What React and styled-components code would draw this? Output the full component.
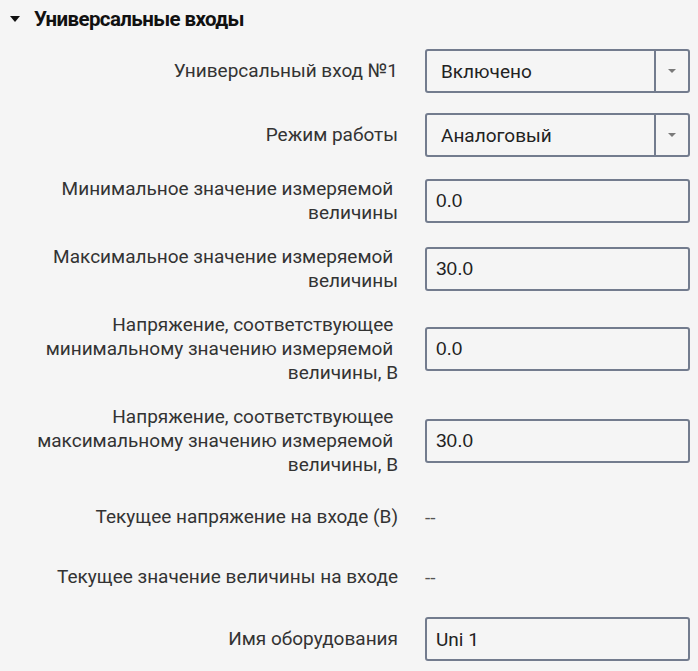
import React from 'react'
import styled, { createGlobalStyle } from 'styled-components';

const GlobalStyle = createGlobalStyle`
    body {
        margin: 0;
        background: #f5f5f5;
        font-family: Roboto, "Noto Sans", sans-serif;
        color: #333;
    }
`;

const Section = styled.div`
    width: 698px;
    padding: 0 8px 0 0;
    box-sizing: border-box;
`;

const Header = styled.div`
    display: flex;
    align-items: center;
    height: 37px;
    padding-left: 10px;
    gap: 14px;
    font-size: 20.5px;
    font-weight: bold;
    letter-spacing: -0.6px;
    color: #111;
`;

const Caret = styled.span`
    width: 0;
    height: 0;
    border-left: 5.5px solid transparent;
    border-right: 5.5px solid transparent;
    border-top: 6px solid #111;
    margin-top: 1px;
`;

const Rows = styled.div`
    display: flex;
    flex-direction: column;
    gap: 20px;
    padding-top: 12px;
`;

const Row = styled.div`
    display: grid;
    grid-template-columns: 398px 1fr;
    column-gap: 27px;
    align-items: center;
    min-height: ${p => p.$static ? '40px' : '44px'};
`;

const Label = styled.div`
    text-align: right;
    font-size: 19px;
    line-height: 24px;
    color: #333;
`;

const Field = styled.div`
    height: 44px;
    box-sizing: border-box;
    border: 2px solid #737c8e;
    border-radius: 3px;
    display: flex;
    align-items: center;
    font-size: 19px;
    color: #222;
    font-family: ${p => p.$mono ? '"Liberation Sans", Arial, sans-serif' : 'Roboto, sans-serif'};
    padding-left: ${p => p.$select ? '14px' : '9px'};
`;

const SelectText = styled.span`
    flex: 1;
`;

const ArrowBox = styled.div`
    width: 32px;
    height: 100%;
    border-left: 2px solid #737c8e;
    display: flex;
    align-items: center;
    justify-content: center;
    &::after {
        content: '';
        border-left: 4px solid transparent;
        border-right: 4px solid transparent;
        border-top: 4px solid #7a7a7a;
    }
`;

const StaticValue = styled.div`
    font-size: 19px;
    color: #555;
`;

const Select = ({ value }) => (
    <Field $select>
        <SelectText>{value}</SelectText>
        <ArrowBox />
    </Field>
)

const App = () => {
  return (
    <Section>
        <GlobalStyle />
        <Header><Caret />Универсальные входы</Header>
        <Rows>
            <Row>
                <Label>Универсальный вход №1</Label>
                <Select value="Включено" />
            </Row>
            <Row>
                <Label>Режим работы</Label>
                <Select value="Аналоговый" />
            </Row>
            <Row>
                <Label>Минимальное значение измеряемой&nbsp;<br />величины</Label>
                <Field $mono>0.0</Field>
            </Row>
            <Row>
                <Label>Максимальное значение измеряемой&nbsp;<br />величины</Label>
                <Field $mono>30.0</Field>
            </Row>
            <Row>
                <Label>Напряжение, соответствующее&nbsp;<br />минимальному значению измеряемой&nbsp;<br />величины, В</Label>
                <Field $mono>0.0</Field>
            </Row>
            <Row>
                <Label>Напряжение, соответствующее&nbsp;<br />максимальному значению измеряемой&nbsp;<br />величины, В</Label>
                <Field $mono>30.0</Field>
            </Row>
            <Row $static>
                <Label>Текущее напряжение на входе (В)</Label>
                <StaticValue>--</StaticValue>
            </Row>
            <Row $static>
                <Label>Текущее значение величины на входе</Label>
                <StaticValue>--</StaticValue>
            </Row>
            <Row>
                <Label>Имя оборудования</Label>
                <Field>Uni 1</Field>
            </Row>
        </Rows>
    </Section>
  )
}

export default App
